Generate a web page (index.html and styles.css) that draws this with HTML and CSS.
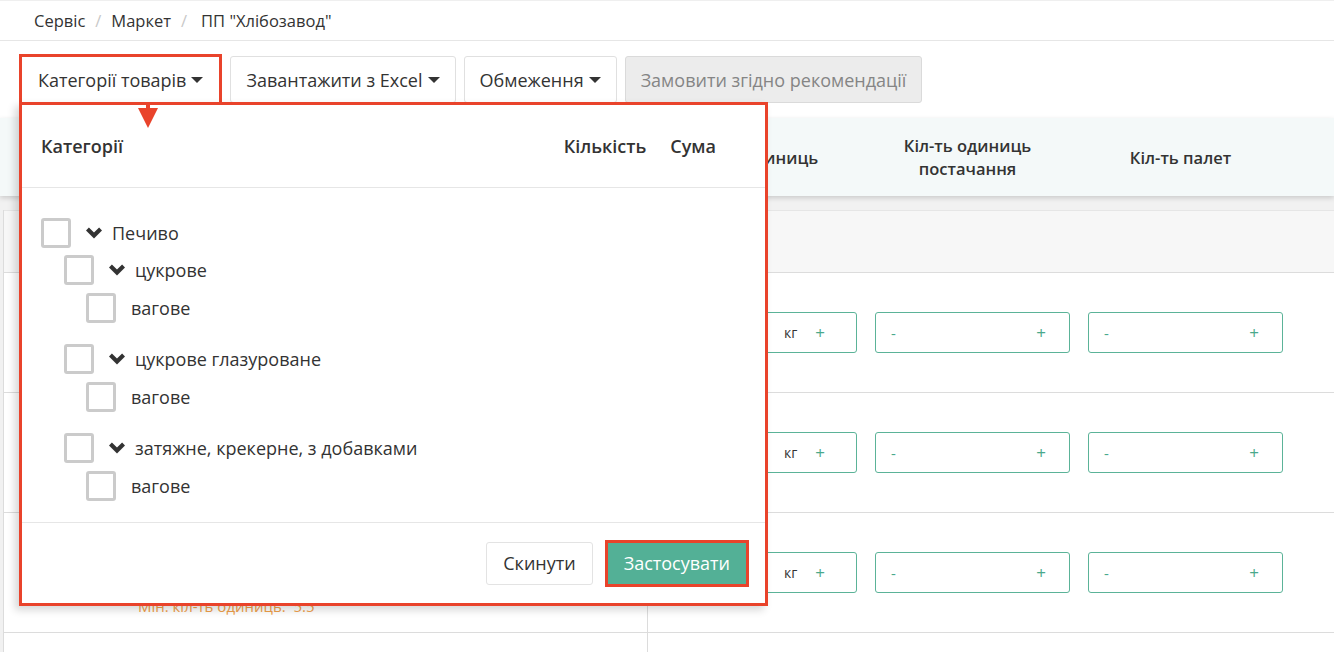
FILE: index.html
```html
<!DOCTYPE html>
<html lang="uk">
<head>
    <meta charset="UTF-8">
    <meta name="viewport" content="width=device-width, initial-scale=1.0">
    <title>Маркет - ПП "Хлібозавод"</title>
    <link rel="stylesheet" href="styles.css">
</head>
<body>
    <div class="breadcrumbs">
        <a href="#">Сервіс</a><span class="sep">/</span>
        <a href="#">Маркет</a><span class="sep">/</span>
        <span class="current">ПП "Хлібозавод"</span>
    </div>

    <div class="toolbar">
        <div class="dd">
            <button class="btn btn-marked">Категорії товарів <span class="caret"></span></button>

            <div class="dd-menu">
                <span class="pointer"></span>
                <div class="dd-head">
                    <span class="dd-title">Категорії</span>
                    <span>Кількість</span>
                    <span class="dd-sum">Сума</span>
                </div>

                <ul class="tree">
                    <li>
                        <div class="node top"><span class="check"></span><svg class="chev" viewBox="0 0 16 12"><polygon points="0,3.4 2.9,0.5 8,5.6 13.1,0.5 16,3.4 8,11.4"/></svg><span class="label">Печиво</span></div>
                        <ul class="sub">
                            <li class="group">
                                <div class="node"><span class="check"></span><svg class="chev" viewBox="0 0 16 12"><polygon points="0,3.4 2.9,0.5 8,5.6 13.1,0.5 16,3.4 8,11.4"/></svg><span class="label">цукрове</span></div>
                                <ul class="leaves">
                                    <li><div class="node leaf"><span class="check"></span><span class="label">вагове</span></div></li>
                                </ul>
                            </li>
                            <li class="group">
                                <div class="node"><span class="check"></span><svg class="chev" viewBox="0 0 16 12"><polygon points="0,3.4 2.9,0.5 8,5.6 13.1,0.5 16,3.4 8,11.4"/></svg><span class="label">цукрове глазуроване</span></div>
                                <ul class="leaves">
                                    <li><div class="node leaf"><span class="check"></span><span class="label">вагове</span></div></li>
                                </ul>
                            </li>
                            <li class="group">
                                <div class="node"><span class="check"></span><svg class="chev" viewBox="0 0 16 12"><polygon points="0,3.4 2.9,0.5 8,5.6 13.1,0.5 16,3.4 8,11.4"/></svg><span class="label">затяжне, крекерне, з добавками</span></div>
                                <ul class="leaves">
                                    <li><div class="node leaf"><span class="check"></span><span class="label">вагове</span></div></li>
                                </ul>
                            </li>
                        </ul>
                    </li>
                </ul>

                <div class="dd-foot">
                    <button class="btn btn-reset">Скинути</button>
                    <button class="btn btn-apply">Застосувати</button>
                </div>
            </div>
        </div>

        <button class="btn">Завантажити з Excel <span class="caret"></span></button>
        <button class="btn">Обмеження <span class="caret"></span></button>
        <button class="btn" disabled>Замовити згідно рекомендації</button>
    </div>

    <div class="table-wrap">
        <div class="thead">
            <div class="th">Товар</div>
            <div class="th">Кіл-ть одиниць</div>
            <div class="th">Кіл-ть одиниць<br>постачання</div>
            <div class="th">Кіл-ть палет</div>
            <div class="th"></div>
        </div>

        <div class="tbody">
            <div class="group-row">Печиво цукрове</div>

            <div class="row">
                <div class="cell product"><span class="note">Мін. кіл-ть одиниць:&nbsp; 5.5</span></div>
                <div class="cell"><div class="qty"><span class="minus">-</span><span class="unit">кг</span><span class="plus">+</span></div></div>
                <div class="cell"><div class="qty"><span class="minus">-</span><span class="plus">+</span></div></div>
                <div class="cell"><div class="qty"><span class="minus">-</span><span class="plus">+</span></div></div>
                <div class="cell"></div>
            </div>

            <div class="row">
                <div class="cell product"><span class="note">Мін. кіл-ть одиниць:&nbsp; 5.5</span></div>
                <div class="cell"><div class="qty"><span class="minus">-</span><span class="unit">кг</span><span class="plus">+</span></div></div>
                <div class="cell"><div class="qty"><span class="minus">-</span><span class="plus">+</span></div></div>
                <div class="cell"><div class="qty"><span class="minus">-</span><span class="plus">+</span></div></div>
                <div class="cell"></div>
            </div>

            <div class="row">
                <div class="cell product"><span class="note">Мін. кіл-ть одиниць:&nbsp; 5.5</span></div>
                <div class="cell"><div class="qty"><span class="minus">-</span><span class="unit">кг</span><span class="plus">+</span></div></div>
                <div class="cell"><div class="qty"><span class="minus">-</span><span class="plus">+</span></div></div>
                <div class="cell"><div class="qty"><span class="minus">-</span><span class="plus">+</span></div></div>
                <div class="cell"></div>
            </div>

            <div class="row">
                <div class="cell product"></div>
                <div class="cell"></div>
                <div class="cell"></div>
                <div class="cell"></div>
                <div class="cell"></div>
            </div>
        </div>
    </div>
</body>
</html>
```

FILE: styles.css
```css
* {
    box-sizing: border-box;
}

body {
    margin: 0;
    font-family: 'Open Sans', sans-serif;
    color: #333;
    background: #fff;
    overflow: hidden;
}

/* breadcrumbs */
.breadcrumbs {
    height: 41px;
    border-top: 1px solid #efefef;
    border-bottom: 1px solid #e6e6e6;
    display: flex;
    align-items: center;
    padding-left: 34px;
    font-size: 16.5px;
}

.breadcrumbs a {
    color: #333;
    text-decoration: none;
}

.breadcrumbs .sep {
    color: #c8c8c8;
    margin: 0 10px;
}

.breadcrumbs .current {
    margin-left: 4px;
}

/* toolbar */
.toolbar {
    display: flex;
    align-items: center;
    gap: 8px;
    padding: 13px 19px;
}

.btn {
    height: 47px;
    padding: 0 15px;
    border: 1px solid #e0e0e0;
    border-radius: 3px;
    background: #fff;
    font-family: 'Open Sans', sans-serif;
    font-size: 18px;
    color: #333;
    display: inline-flex;
    align-items: center;
    white-space: nowrap;
    cursor: pointer;
}

.btn:disabled {
    background: #ececec;
    border-color: #dadada;
    color: #858585;
    cursor: not-allowed;
}

.btn-marked {
    height: 51px;
    padding: 0 16px;
    border: 3px solid #e9432b;
    border-radius: 0;
}

.caret {
    display: inline-block;
    width: 0;
    height: 0;
    margin-left: 5px;
    border-top: 6px solid #333;
    border-left: 6px solid transparent;
    border-right: 6px solid transparent;
}

/* categories dropdown */
.dd {
    position: relative;
}

.dd-menu {
    position: absolute;
    top: calc(100% - 3px);
    left: 0;
    width: 749px;
    background: #fff;
    border: 3px solid #e9432b;
    box-shadow: -4px 4px 8px rgba(0, 0, 0, 0.16);
    z-index: 10;
}

.pointer {
    position: absolute;
    top: 0;
    left: 124px;
    width: 4px;
    height: 4px;
    background: #e9432b;
}

.pointer::after {
    content: '';
    position: absolute;
    top: 3px;
    left: -8px;
    border-top: 20px solid #e9432b;
    border-left: 10px solid transparent;
    border-right: 10px solid transparent;
}

.dd-head {
    height: 83px;
    display: flex;
    align-items: center;
    padding: 0 49px 0 19px;
    border-bottom: 1px solid #e6e6e6;
    font-size: 18px;
    font-weight: 600;
}

.dd-title {
    flex: 1;
}

.dd-sum {
    margin-left: 24px;
}

.tree,
.tree ul {
    list-style: none;
    margin: 0;
}

.tree {
    padding: 30px 0 0 19px;
}

.tree .sub {
    padding-left: 23px;
}

.tree .leaves {
    padding-left: 22px;
}

.tree .group {
    padding-bottom: 13px;
}

.node {
    display: flex;
    align-items: center;
    height: 30px;
    margin-bottom: 8px;
    font-size: 18px;
}

.node.top {
    margin-bottom: 7px;
}

.check {
    width: 30px;
    height: 30px;
    flex: none;
    border: 3px solid #cbcbcb;
    border-radius: 3px;
    background: #fff;
}

.chev {
    width: 16px;
    height: 12px;
    margin-left: 15px;
    fill: #333;
}

.node .label {
    margin-left: 10px;
}

.node.leaf .label {
    margin-left: 15px;
}

.dd-foot {
    height: 81px;
    border-top: 1px solid #e6e6e6;
    display: flex;
    justify-content: flex-end;
    align-items: center;
    padding-right: 16px;
}

.btn-reset {
    height: 43px;
    padding: 0 16px;
    margin-right: 12px;
    border-color: #e3e3e3;
}

.btn-apply {
    height: 47px;
    padding: 0 16px;
    border: 3px solid #e9432b;
    border-radius: 0;
    background: #53b096;
    color: #fff;
}

/* table */
.table-wrap {
    background: #f1f1f1;
    min-height: 600px;
}

.thead {
    display: grid;
    grid-template-columns: 648px 213px 213px 213px 1fr;
    height: 78px;
    background: #f4f9f9;
    box-shadow: 0 2px 5px rgba(0, 0, 0, 0.16);
    position: relative;
}

.th {
    display: flex;
    align-items: center;
    justify-content: center;
    text-align: center;
    font-size: 16.5px;
    font-weight: 600;
    line-height: 23px;
}

.tbody {
    margin: 14px 0 0 3px;
    border-left: 1px solid #dcdcdc;
    background: #fff;
}

.group-row {
    height: 63px;
    background: #f7f7f7;
    border-top: 1px solid #e6e6e6;
    border-bottom: 1px solid #dcdcdc;
    padding: 20px;
    color: #f7f7f7;
}

.row {
    display: grid;
    grid-template-columns: 644px 213px 213px 213px 1fr;
    height: 120px;
    border-bottom: 1px solid #dcdcdc;
}

.cell {
    display: flex;
    align-items: center;
}

.cell.product {
    border-right: 1px solid #dcdcdc;
    align-items: flex-end;
    padding: 0 0 16px 134px;
}

.note {
    color: #f0a04b;
    font-size: 15px;
    line-height: 20px;
}

.qty {
    width: 195px;
    height: 41px;
    margin-left: 14px;
    border: 1px solid #5bb398;
    border-radius: 3px;
    display: flex;
    align-items: center;
    padding: 0 23px 0 15px;
    color: #4aa98b;
    font-size: 16px;
}

.qty .minus {
    flex: 1;
    font-size: 15px;
}

.qty .unit {
    color: #333;
    font-size: 14px;
    margin-right: 18px;
}

.qty .unit + .plus {
    margin-right: 8px;
}

.plus {
    font-size: 17px;
}
```
